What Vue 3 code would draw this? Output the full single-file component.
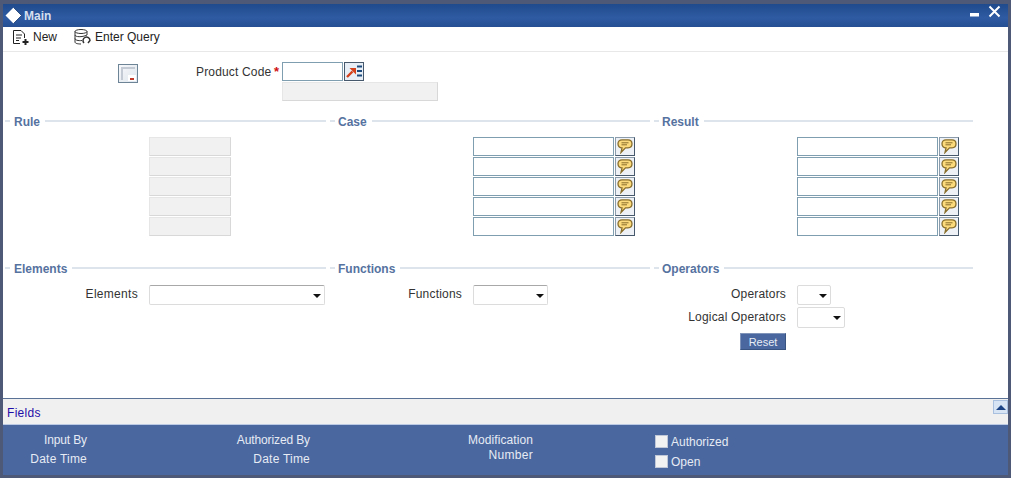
<script setup>
const cases = [1, 2, 3, 4, 5]
</script>

<template>
  <div class="window">
    <header class="titlebar">
      <div class="title-left">
        <svg class="logo" width="17" height="17" viewBox="0 0 17 17"><path d="M8.500 .5 16.500 8.500 8.500 16.500 .5 8.500Z" fill="#fff" /><path d="M8.500 .5 16.500 8.500 8.500 16.500" fill="none" stroke="#16396f" stroke-width=".8" /></svg>
        <span>Main</span>
      </div>
      <div class="win-btns">
        <svg width="10" height="14" viewBox="0 0 10 14"><rect x="0" y="9" width="9" height="3.500" fill="#fff" /></svg>
        <svg class="close" width="13" height="13" viewBox="0 0 13 13"><path d="M1.500 1.500 11.500 11.500M11.500 1.500 1.500 11.500" stroke="#fff" stroke-width="2" fill="none" /></svg>
      </div>
    </header>

    <nav class="toolbar">
      <span class="tool tool-new">
        <svg width="17" height="16" viewBox="0 0 17 16" fill="none" stroke="#222" stroke-width="1"><path d="M.5 14.500V1.500H8L11.500 5V9M.5 14.500H7M3 6H9M3 9H8M3 11.500H6" /><path d="M12.500 10V16M9.500 13H15.500" stroke-width="2" /></svg>
        <span>New</span>
      </span>
      <span class="tool">
        <svg width="18" height="16" viewBox="0 0 18 16" fill="none" stroke="#333" stroke-width="1"><ellipse cx="7" cy="2.500" rx="6" ry="2" /><path d="M1 2.500V13C1 14.500 4 15 7 15M13 2.500V6M1 6C1 8 8 8.500 13 6M1 9.500C1 11 4 12 8 11.500" /><path d="M10 14A3.500 3.500 0 1 1 16 11.500L14 14" stroke-width="1.500" /></svg>
        <span>Enter Query</span>
      </span>
    </nav>

    <main class="body">
      <section class="product">
        <span class="doc-btn">
          <svg width="18" height="17" viewBox="0 0 18 17"><path d="M2 2H16V4H4V15H2Z" fill="#c3cad3" /><rect x="9" y="10" width="8" height="6" fill="#fff" /><rect x="11" y="13" width="4" height="2" fill="#c23a2a" /></svg>
        </span>
        <div class="product-fields">
          <div class="product-row">
            <label>Product Code</label>
            <b class="star">*</b>
            <input class="text code" />
            <span class="lov">
              <svg width="18" height="15" viewBox="0 0 18 15"><path d="M2 13 7.500 7.500" stroke="#d2401c" stroke-width="2.400" fill="none" /><path d="M4.500 4H11V10.500Z" fill="#d2401c" /><path d="M12 2.500H17M12 7H17M12 11.500H17" stroke="#1c4a7c" stroke-width="2.200" /></svg>
            </span>
          </div>
          <div class="readonly desc"></div>
        </div>
      </section>

      <section class="grid top-grid">
        <div class="col col-rule">
          <h3 class="legend"><i class="dash"></i><span>Rule</span><i class="line"></i></h3>
          <div class="stack rule-stack"><div v-for="c in cases" :key="c" class="readonly cell"></div></div>
        </div>
        <div class="col col-case">
          <h3 class="legend"><i class="dash"></i><span>Case</span><i class="line"></i></h3>
          <div class="stack case-stack">
            <div v-for="c in cases" :key="c" class="input-row">
              <input class="text wide" />
              <span class="note">
                <svg width="16" height="15" viewBox="0 0 16 15"><path d="M5 .8H11C13.500 .8 15 2.300 15 4.800S13.500 8.800 11 8.800H8.500L4 13.500 5 8.800C2.500 8.800 1 7.300 1 4.800S2.500 .8 5 .8Z" fill="#fcdb7c" stroke="#8a6f2c" stroke-width="1.300" /><path d="M4.500 3.800H11.500M4.500 5.800H10" stroke="#8a6f2c" /></svg>
              </span>
            </div>
          </div>
        </div>
        <div class="col col-result">
          <h3 class="legend"><i class="dash"></i><span>Result</span><i class="line"></i></h3>
          <div class="stack result-stack">
            <div v-for="c in cases" :key="c" class="input-row">
              <input class="text wide" />
              <span class="note">
                <svg width="16" height="15" viewBox="0 0 16 15"><path d="M5 .8H11C13.500 .8 15 2.300 15 4.800S13.500 8.800 11 8.800H8.500L4 13.500 5 8.800C2.500 8.800 1 7.300 1 4.800S2.500 .8 5 .8Z" fill="#fcdb7c" stroke="#8a6f2c" stroke-width="1.300" /><path d="M4.500 3.800H11.500M4.500 5.800H10" stroke="#8a6f2c" /></svg>
              </span>
            </div>
          </div>
        </div>
      </section>

      <section class="grid bottom-grid">
        <div class="col col-rule">
          <h3 class="legend"><i class="dash"></i><span>Elements</span><i class="line"></i></h3>
          <div class="field el-field">
            <label>Elements</label>
            <span class="select el-select"><i class="caret"></i></span>
          </div>
        </div>
        <div class="col col-case">
          <h3 class="legend"><i class="dash"></i><span>Functions</span><i class="line"></i></h3>
          <div class="field fn-field">
            <label>Functions</label>
            <span class="select fn-select"><i class="caret"></i></span>
          </div>
        </div>
        <div class="col col-result">
          <h3 class="legend"><i class="dash"></i><span>Operators</span><i class="line"></i></h3>
          <div class="field op-field">
            <label>Operators</label>
            <span class="select op-select"><i class="caret"></i></span>
          </div>
          <div class="field op-field logical">
            <label>Logical Operators</label>
            <span class="select lo-select"><i class="caret"></i></span>
          </div>
          <div class="reset-row"><button class="reset">Reset</button></div>
        </div>
      </section>
    </main>

    <div class="fields-bar">
      <span class="fields-label">Fields</span>
      <span class="collapse"><i></i></span>
    </div>

    <footer class="footer">
      <div class="f-col f1"><span class="tight">Input By</span><span class="loose">Date Time</span></div>
      <div class="f-col f2"><span class="tight">Authorized By</span><span class="loose">Date Time</span></div>
      <div class="f-col f3 f-mod"><span class="mod">Modification</span><span class="num">Number</span></div>
      <div class="checks">
        <label class="check"><i></i><span>Authorized</span></label>
        <label class="check"><i></i><span>Open</span></label>
      </div>
    </footer>
  </div>
</template>

<style>
html, body { margin: 0; padding: 0; background: #4e5877; }
</style>

<style scoped>
* { box-sizing: border-box; }
.window {
  width: 1011px;
  height: 478px;
  padding: 4px 3px 3px;
  display: flex;
  flex-direction: column;
  background: #4e5877;
  font: 12px "Liberation Sans", Arial, sans-serif;
  color: #333;
  overflow: hidden;
}
.titlebar {
  height: 23px;
  flex: none;
  display: flex;
  justify-content: space-between;
  align-items: center;
  background: linear-gradient(#1f4a8c, #2f5ba3 60%, #264f93);
  color: #d5dfee;
  font-weight: bold;
}
.title-left { display: flex; align-items: center; gap: 2px; padding-left: 2px; }
.win-btns { display: flex; align-items: flex-start; gap: 8px; padding-right: 7px; height: 100%; }
.close { margin-top: 1px; }
.toolbar {
  height: 25px;
  flex: none;
  display: flex;
  align-items: center;
  gap: 17px;
  padding: 0 0 4px 10px;
  background: #fff;
  border-bottom: 1px solid #e8e8e8;
  color: #222;
}
.tool { display: flex; align-items: center; gap: 3px; }
.body { flex: 1; background: #fff; min-height: 0; }
.product {
  display: flex;
  padding: 10px 0 0 115px;
  height: 62px;
}
.doc-btn {
  width: 20px;
  height: 19px;
  margin-top: 2px;
  border: 1px solid #6d8496;
  background: linear-gradient(135deg, #f6f8fa, #dfe6ee);
  display: block;
}
.doc-btn svg { display: block; }
.product-fields { margin-left: 58px; }
.product-row { display: flex; align-items: flex-start; height: 20px; }
.product-row label { width: 75px; white-space: nowrap; text-align: right; letter-spacing: .16px; margin-top: 3px; }
.star { width: 8px; text-align: right; color: #d01010; margin: 2px 3px 0 0; font-size: 13px; }
.text {
  display: block;
  height: 19px;
  border: 1px solid #7f9fb0;
  background: #fff;
  padding: 0;
  margin: 0;
  outline: none;
}
.code { width: 61px; }
.lov {
  width: 20px;
  height: 19px;
  margin-left: 1px;
  border: 1px solid #46586c;
  background: #e8eef5;
  display: flex;
  align-items: center;
  justify-content: center;
}
.readonly {
  background: #f1f1f1;
  border: 1px solid #e6e6e6;
  border-bottom-color: #d8d8d8;
  border-right-color: #d8d8d8;
}
.desc { width: 156px; height: 19px; margin: 0 0 0 86px; }
.grid { display: grid; grid-template-columns: 325px 324px 319px; margin-left: 2px; }
.top-grid { height: 147px; }
.legend {
  display: flex;
  align-items: center;
  height: 14px;
  margin: 0;
  font-size: 12px;
  font-weight: bold;
  color: #56729f;
}
.legend span { padding-top: 2px; }
.dash { width: 5px; height: 2px; background: #dde4ec; margin-right: 4px; flex: none; }
.legend .line { flex: 1; height: 2px; background: #dde4ec; margin-left: 5px; }
.col-case .dash, .col-result .dash { margin-right: 3px; }
.col-rule .legend, .col-case .legend { padding-right: 4px; }
.stack { margin-top: 9px; display: flex; flex-direction: column; }
.rule-stack { padding-left: 144px; gap: 1px; }
.cell { width: 82px; height: 19px; }
.case-stack { padding-left: 143px; gap: 1px; }
.result-stack { padding-left: 143px; gap: 1px; }
.input-row { display: flex; gap: 1px; height: 19px; }
.wide { width: 141px; }
.note {
  width: 20px;
  height: 19px;
  border: 1px solid #46586c;
  border-top-color: #8b9cac;
  border-left-color: #8b9cac;
  background: #eef2f7;
  display: flex;
  align-items: center;
  justify-content: center;
}
.field { display: flex; align-items: center; margin-top: 10px; height: 20px; }
.field label { text-align: right; margin-right: 11px; padding-bottom: 2px; color: #333; letter-spacing: .3px; white-space: nowrap; }
.el-field label { width: 133px; }
.fn-field label { width: 132px; letter-spacing: .2px; }
.op-field label { width: 132px; margin-right: 11px; letter-spacing: .18px; }
.logical { margin-top: 2px; height: 21px; }
.select {
  display: block;
  position: relative;
  height: 20px;
  border: 1px solid #dcdcdc;
  border-top-color: #a8a8a8;
  border-radius: 2px;
  background: #fff;
}
.logical .select { height: 21px; }
.el-select { width: 176px; }
.fn-select { width: 75px; }
.op-select { width: 34px; border-top-color: #dcdcdc; }
.lo-select { width: 48px; border-top-color: #dcdcdc; }
.caret {
  position: absolute;
  right: 3px;
  top: 8px;
  border: 4px solid transparent;
  border-top: 4px solid #111;
  border-bottom: 0;
}
.reset-row { padding: 5px 0 0 86px; }
.reset {
  display: block;
  width: 46px;
  height: 17px;
  padding: 0;
  border: 1px solid #3a5482;
  border-top-color: #7f94b8;
  border-left-color: #7f94b8;
  background: #4a679f;
  color: #e8edf5;
  font: 11px "Liberation Sans", Arial, sans-serif;
}
.fields-bar {
  flex: none;
  height: 27px;
  display: flex;
  justify-content: space-between;
  align-items: center;
  padding-left: 4px;
  background: #f0f0f0;
  border-top: 1px solid #5a7295;
  border-bottom: 1px solid #bccbe3;
  color: #1f0fa8;
}
.fields-label { letter-spacing: .3px; padding-top: 2px; }
.collapse {
  align-self: flex-start;
  margin-top: 1px;
  width: 15px;
  height: 14px;
  border: 1px solid #a9c0de;
  background: #d7e4f4;
  display: flex;
  align-items: center;
  justify-content: center;
}
.collapse i {
  border: 5px solid transparent;
  border-bottom: 5px solid #1d4585;
  border-top: 0;
}
.footer {
  flex: none;
  height: 50px;
  display: flex;
  background: #4a679f;
  color: #e6ebf4;
}
.f-col { display: flex; flex-direction: column; text-align: right; gap: 5px; padding-top: 8px; }
.f-col span { line-height: 14px; }
.tight { letter-spacing: -.12px; }
.loose { letter-spacing: .22px; }
.mod { letter-spacing: .08px; }
.num { letter-spacing: .3px; }
.f1 { width: 84px; }
.f2 { width: 223px; }
.f3 { width: 223px; }
.f-mod { gap: 1px; }
.checks { margin-left: 122px; padding-top: 8px; display: flex; flex-direction: column; gap: 4px; }
.check { display: flex; align-items: center; gap: 3px; height: 16px; }
.check span { line-height: 14px; padding-top: 2px; }
.check i { width: 13px; height: 13px; background: #f2f2f2; border: 1px solid #c0c8d8; display: block; }
</style>
